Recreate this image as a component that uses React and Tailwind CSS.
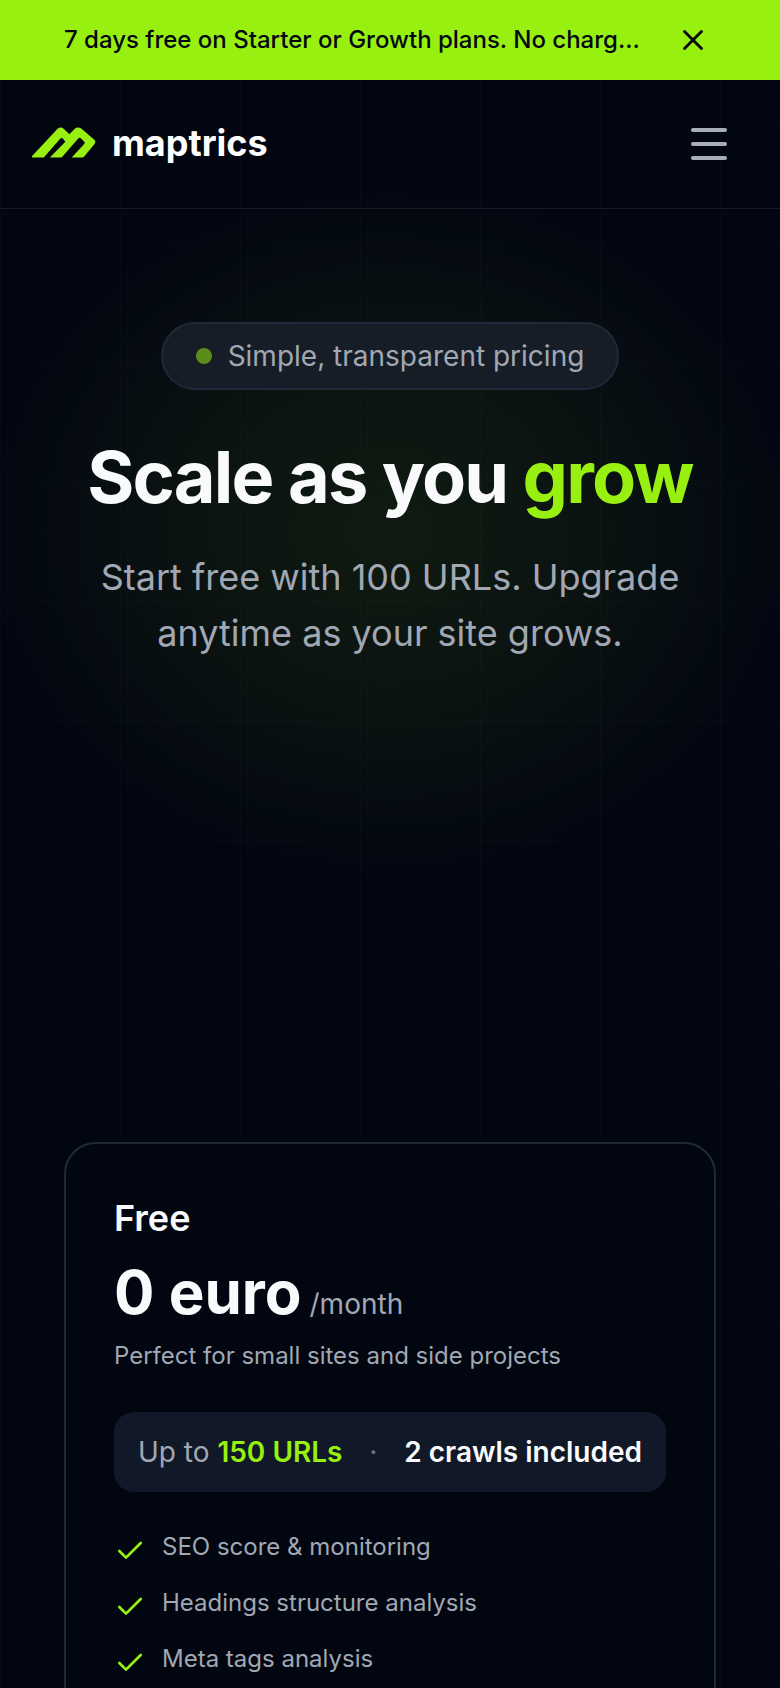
import React from "react";
import { X, Check } from "lucide-react";

const features = ["SEO score & monitoring", "Headings structure analysis", "Meta tags analysis"];

function Logo() {
  return (
    <svg width="64" height="31" viewBox="37 55 190 91" fill="#98f011" aria-hidden="true">
      <path d="M40 145 Q34 145 38 140 L113 60 Q122 52 131 60 L148 76 L164 60 Q173 52 184 60 L222 92 Q228 98 222 106 L192 142 Q190 145 186 145 L155 145 L192 105 Q195 101 192 98 L182 88 Q178 85 175 88 L125 145 L90 145 L136 98 L128 88 Q124 85 120 90 L72 145 Z" />
    </svg>
  );
}

export default function App() {
  return (
    <div className="relative h-[1688px] overflow-hidden bg-[#020611] font-['Inter',sans-serif]">
      <div className="absolute inset-0 bg-[linear-gradient(to_right,rgba(255,255,255,0.015)_1px,transparent_1px),linear-gradient(to_bottom,rgba(255,255,255,0.015)_1px,transparent_1px)] bg-[size:120px_120px]" />
      <div className="absolute left-[-20px] top-[180px] h-[700px] w-[820px] bg-[radial-gradient(closest-side,rgba(155,245,15,0.085),rgba(155,245,15,0.055)_50%,transparent)]" />
      <div className="relative">
        <div className="flex h-20 items-center justify-between bg-[#98f011] pl-[64px] pr-[70px] text-[#030712]">
          <span className="text-[24px] font-medium leading-8">7 days free on Starter or Growth plans. No charg...</span>
          <X size={34} strokeWidth={2} />
        </div>
        <nav className="flex h-[129px] items-center justify-between border-b border-[#151b27] pb-[1px] pl-[32px] pr-[53px]">
          <div className="flex items-center gap-[16px] pb-[2px]">
            <Logo />
            <span className="text-[36px] font-bold leading-10 text-white">maptrics</span>
          </div>
          <div className="flex w-[36px] flex-col gap-[10px]">
            <span className="h-1 rounded-full bg-[#a8aeb9]" />
            <span className="h-1 rounded-full bg-[#a8aeb9]" />
            <span className="h-1 rounded-full bg-[#a8aeb9]" />
          </div>
        </nav>
        <section className="flex flex-col items-center pt-[113px]">
          <div className="flex h-[68px] items-center gap-[16px] rounded-full border-2 border-[#1f2937] bg-[#161d27] px-[33px]">
            <span className="h-4 w-4 rounded-full bg-[#5a8c1c]" />
            <span className="text-[28px] leading-9 text-[#a1a8b3]">Simple, transparent pricing</span>
          </div>
          <h1 className="mt-[47px] text-[72px] font-bold leading-[80px] tracking-[-1.8px] text-[#f9fafb]">
            Scale as you <span className="text-[#98f011]">grow</span>
          </h1>
          <p className="mt-[32px] text-center text-[36px] leading-[56px] text-[#a1a8b3]">
            Start free with 100 URLs. Upgrade
            <br />
            anytime as your site grows.
          </p>
        </section>
        <section className="mx-[64px] mt-[481px] h-[600px] rounded-[32px] border-2 border-[#1f2937] bg-[#020611] px-[48px] pt-[54px]">
          <h2 className="text-[36px] font-semibold leading-10 text-[#f9fafb]">Free</h2>
          <div className="mt-[18px] flex items-baseline gap-[8px]">
            <span className="text-[60px] font-bold leading-[72px] text-[#f9fafb]">0 euro</span>
            <span className="text-[28px] leading-9 text-[#a1a8b3]">/month</span>
          </div>
          <p className="mt-[12px] text-[24px] leading-8 text-[#a1a8b3]">Perfect for small sites and side projects</p>
          <div className="mt-[40px] flex h-[80px] items-center justify-between rounded-[20px] bg-[#111827] px-[24px] text-[28px]">
            <span className="text-[#a1a8b3]">
              Up to <span className="font-semibold text-[#98f011]">150 URLs</span>
            </span>
            <span className="text-[#6b7280]">·</span>
            <span className="font-semibold text-[#f9fafb]">2 crawls included</span>
          </div>
          <ul className="mt-[39px] flex flex-col gap-[24px]">
            {features.map((f) => (
              <li key={f} className="flex h-[32px] items-center gap-[16px] text-[24px] leading-8 text-[#a1a8b3]">
                <Check size={32} strokeWidth={2} className="mt-2 text-[#98f011]" />
                {f}
              </li>
            ))}
          </ul>
        </section>
      </div>
    </div>
  );
}
